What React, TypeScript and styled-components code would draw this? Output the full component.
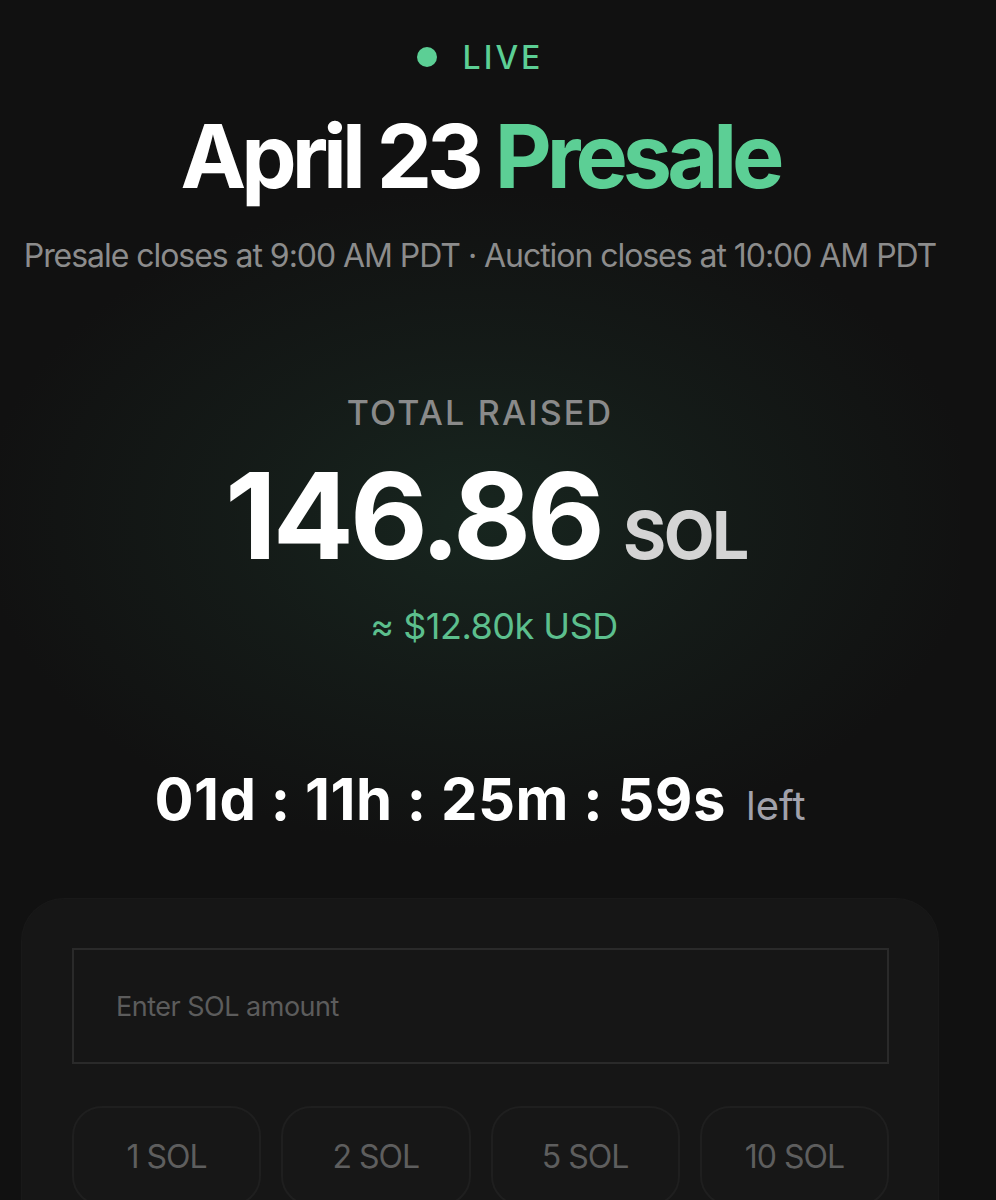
import React from 'react';
import styled, { createGlobalStyle } from 'styled-components';

const GlobalStyle = createGlobalStyle`
  html, body {
    margin: 0;
    padding: 0;
    background: #111111;
  }
  body {
    font-family: Inter, "Noto Sans", "Liberation Sans", sans-serif;
    color: #ffffff;
  }
`;

const Page = styled.div`
  width: 960px;
  height: 1200px;
  overflow: hidden;
  background:
    radial-gradient(ellipse 500px 330px at 480px 520px, rgba(30, 58, 45, 0.5) 0%, rgba(26, 44, 36, 0.35) 50%, rgba(17, 17, 17, 0) 100%),
    #111111;
  display: flex;
  flex-direction: column;
  align-items: center;
`;

const LiveRow = styled.div`
  margin-top: 40px;
  display: flex;
  align-items: center;
  gap: 26px;
  height: 34px;
`;

const Dot = styled.span`
  width: 20px;
  height: 20px;
  border-radius: 50%;
  background: #5ccf95;
`;

const LiveText = styled.span`
  font-size: 32px;
  font-weight: 500;
  letter-spacing: 3px;
  color: #5ccf95;
`;

const Title = styled.h1`
  margin: 32px 0 0;
  font-size: 88px;
  line-height: 100px;
  font-weight: 700;
  letter-spacing: -5px;
`;

const Accent = styled.span`
  color: #5ccf95;
`;

const Subtitle = styled.p`
  margin: 30px 0 0;
  font-size: 32px;
  line-height: 40px;
  color: #8c8c8c;
  letter-spacing: -1.05px;
`;

const Label = styled.div`
  margin-top: 117px;
  font-size: 34px;
  line-height: 40px;
  font-weight: 500;
  letter-spacing: 2.2px;
  color: #8a8a8a;
`;

const Amount = styled.div`
  margin-top: 18px;
  display: flex;
  align-items: baseline;
  gap: 22px;
  padding-left: 12px;
`;

const Big = styled.span`
  font-size: 120px;
  line-height: 130px;
  font-weight: 700;
  letter-spacing: -4px;
`;

const Unit = styled.span`
  font-size: 66px;
  font-weight: 700;
  letter-spacing: -2.5px;
  color: #d4d4d4;
`;

const Usd = styled.div`
  margin-top: 25px;
  padding-left: 28px;
  font-size: 36px;
  line-height: 40px;
  color: #5cbf8d;
  letter-spacing: -0.5px;
`;

const Countdown = styled.div`
  margin-top: 121px;
  display: flex;
  align-items: baseline;
  gap: 20px;
`;

const Time = styled.span`
  font-size: 58px;
  line-height: 64px;
  font-weight: 700;
  letter-spacing: 0.5px;
`;

const Left = styled.span`
  font-size: 40px;
  color: #a1a1ab;
`;

const Card = styled.div`
  margin-top: 68px;
  width: 916px;
  box-sizing: border-box;
  background: #161616;
  border-radius: 42px;
  padding: 49px 49px 40px 50px;
  box-shadow: 0 0 0 1px #191919;
`;

const Input = styled.input`
  display: block;
  width: 100%;
  height: 116px;
  box-sizing: border-box;
  background: #161616;
  border: 2px solid #2a2a2a;
  padding: 0 42px;
  font-family: inherit;
  font-size: 27px;
  letter-spacing: -0.5px;
  color: #ffffff;
  outline: none;
  &::placeholder {
    color: #5c5c5c;
  }
`;

const Presets = styled.div`
  margin-top: 42px;
  display: grid;
  grid-template-columns: repeat(4, 1fr);
  gap: 20px;
`;

const Preset = styled.button`
  height: 100px;
  background: #171717;
  border: 2px solid #1f1f1f;
  border-radius: 30px;
  font-family: inherit;
  font-size: 32px;
  letter-spacing: -1px;
  color: #5e5e5e;
`;

const presets = ['1 SOL', '2 SOL', '5 SOL', '10 SOL'];

export default function App() {
  return (
    <>
      <GlobalStyle />
      <Page>
        <LiveRow>
          <Dot />
          <LiveText>LIVE</LiveText>
        </LiveRow>
        <Title>
          April 23 <Accent>Presale</Accent>
        </Title>
        <Subtitle>Presale closes at 9:00 AM PDT · Auction closes at 10:00 AM PDT</Subtitle>
        <Label>TOTAL RAISED</Label>
        <Amount>
          <Big>146.86</Big>
          <Unit>SOL</Unit>
        </Amount>
        <Usd>≈ $12.80k USD</Usd>
        <Countdown>
          <Time>01d : 11h : 25m : 59s</Time>
          <Left>left</Left>
        </Countdown>
        <Card>
          <Input placeholder="Enter SOL amount" />
          <Presets>
            {presets.map((p) => (
              <Preset key={p}>{p}</Preset>
            ))}
          </Presets>
        </Card>
      </Page>
    </>
  );
}
